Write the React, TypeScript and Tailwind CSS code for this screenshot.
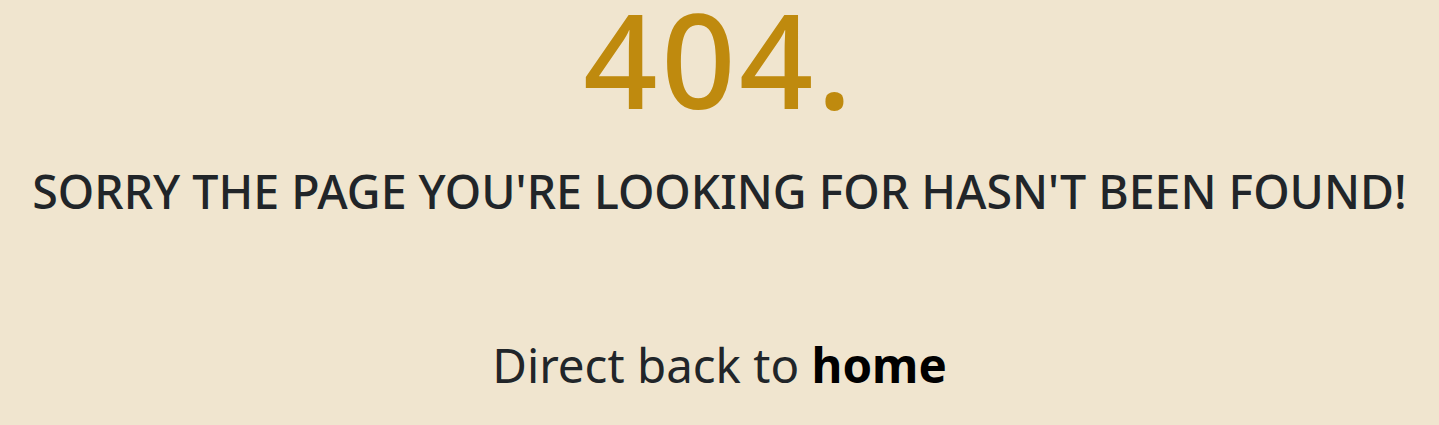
export default function App() {
  return (
    <div className="min-h-[425px] w-full bg-[#f0e5cf] flex flex-col items-center" style={{ fontFamily: '"Noto Sans", sans-serif' }}>
      <h1 className="text-[130px] leading-[118px] font-medium tracking-[3.5px] text-[#bf8a0e]">404.</h1>
      <h2 className="mt-[44px] text-[46.5px] leading-[58px] font-medium text-[#212529] uppercase">Sorry the page you're looking for hasn't been found!</h2>
      <p className="mt-[116px] text-[47.5px] leading-[58px] text-[#212529]">
        Direct back to <a href="#" className="font-bold text-black">home</a>
      </p>
    </div>
  );
}
